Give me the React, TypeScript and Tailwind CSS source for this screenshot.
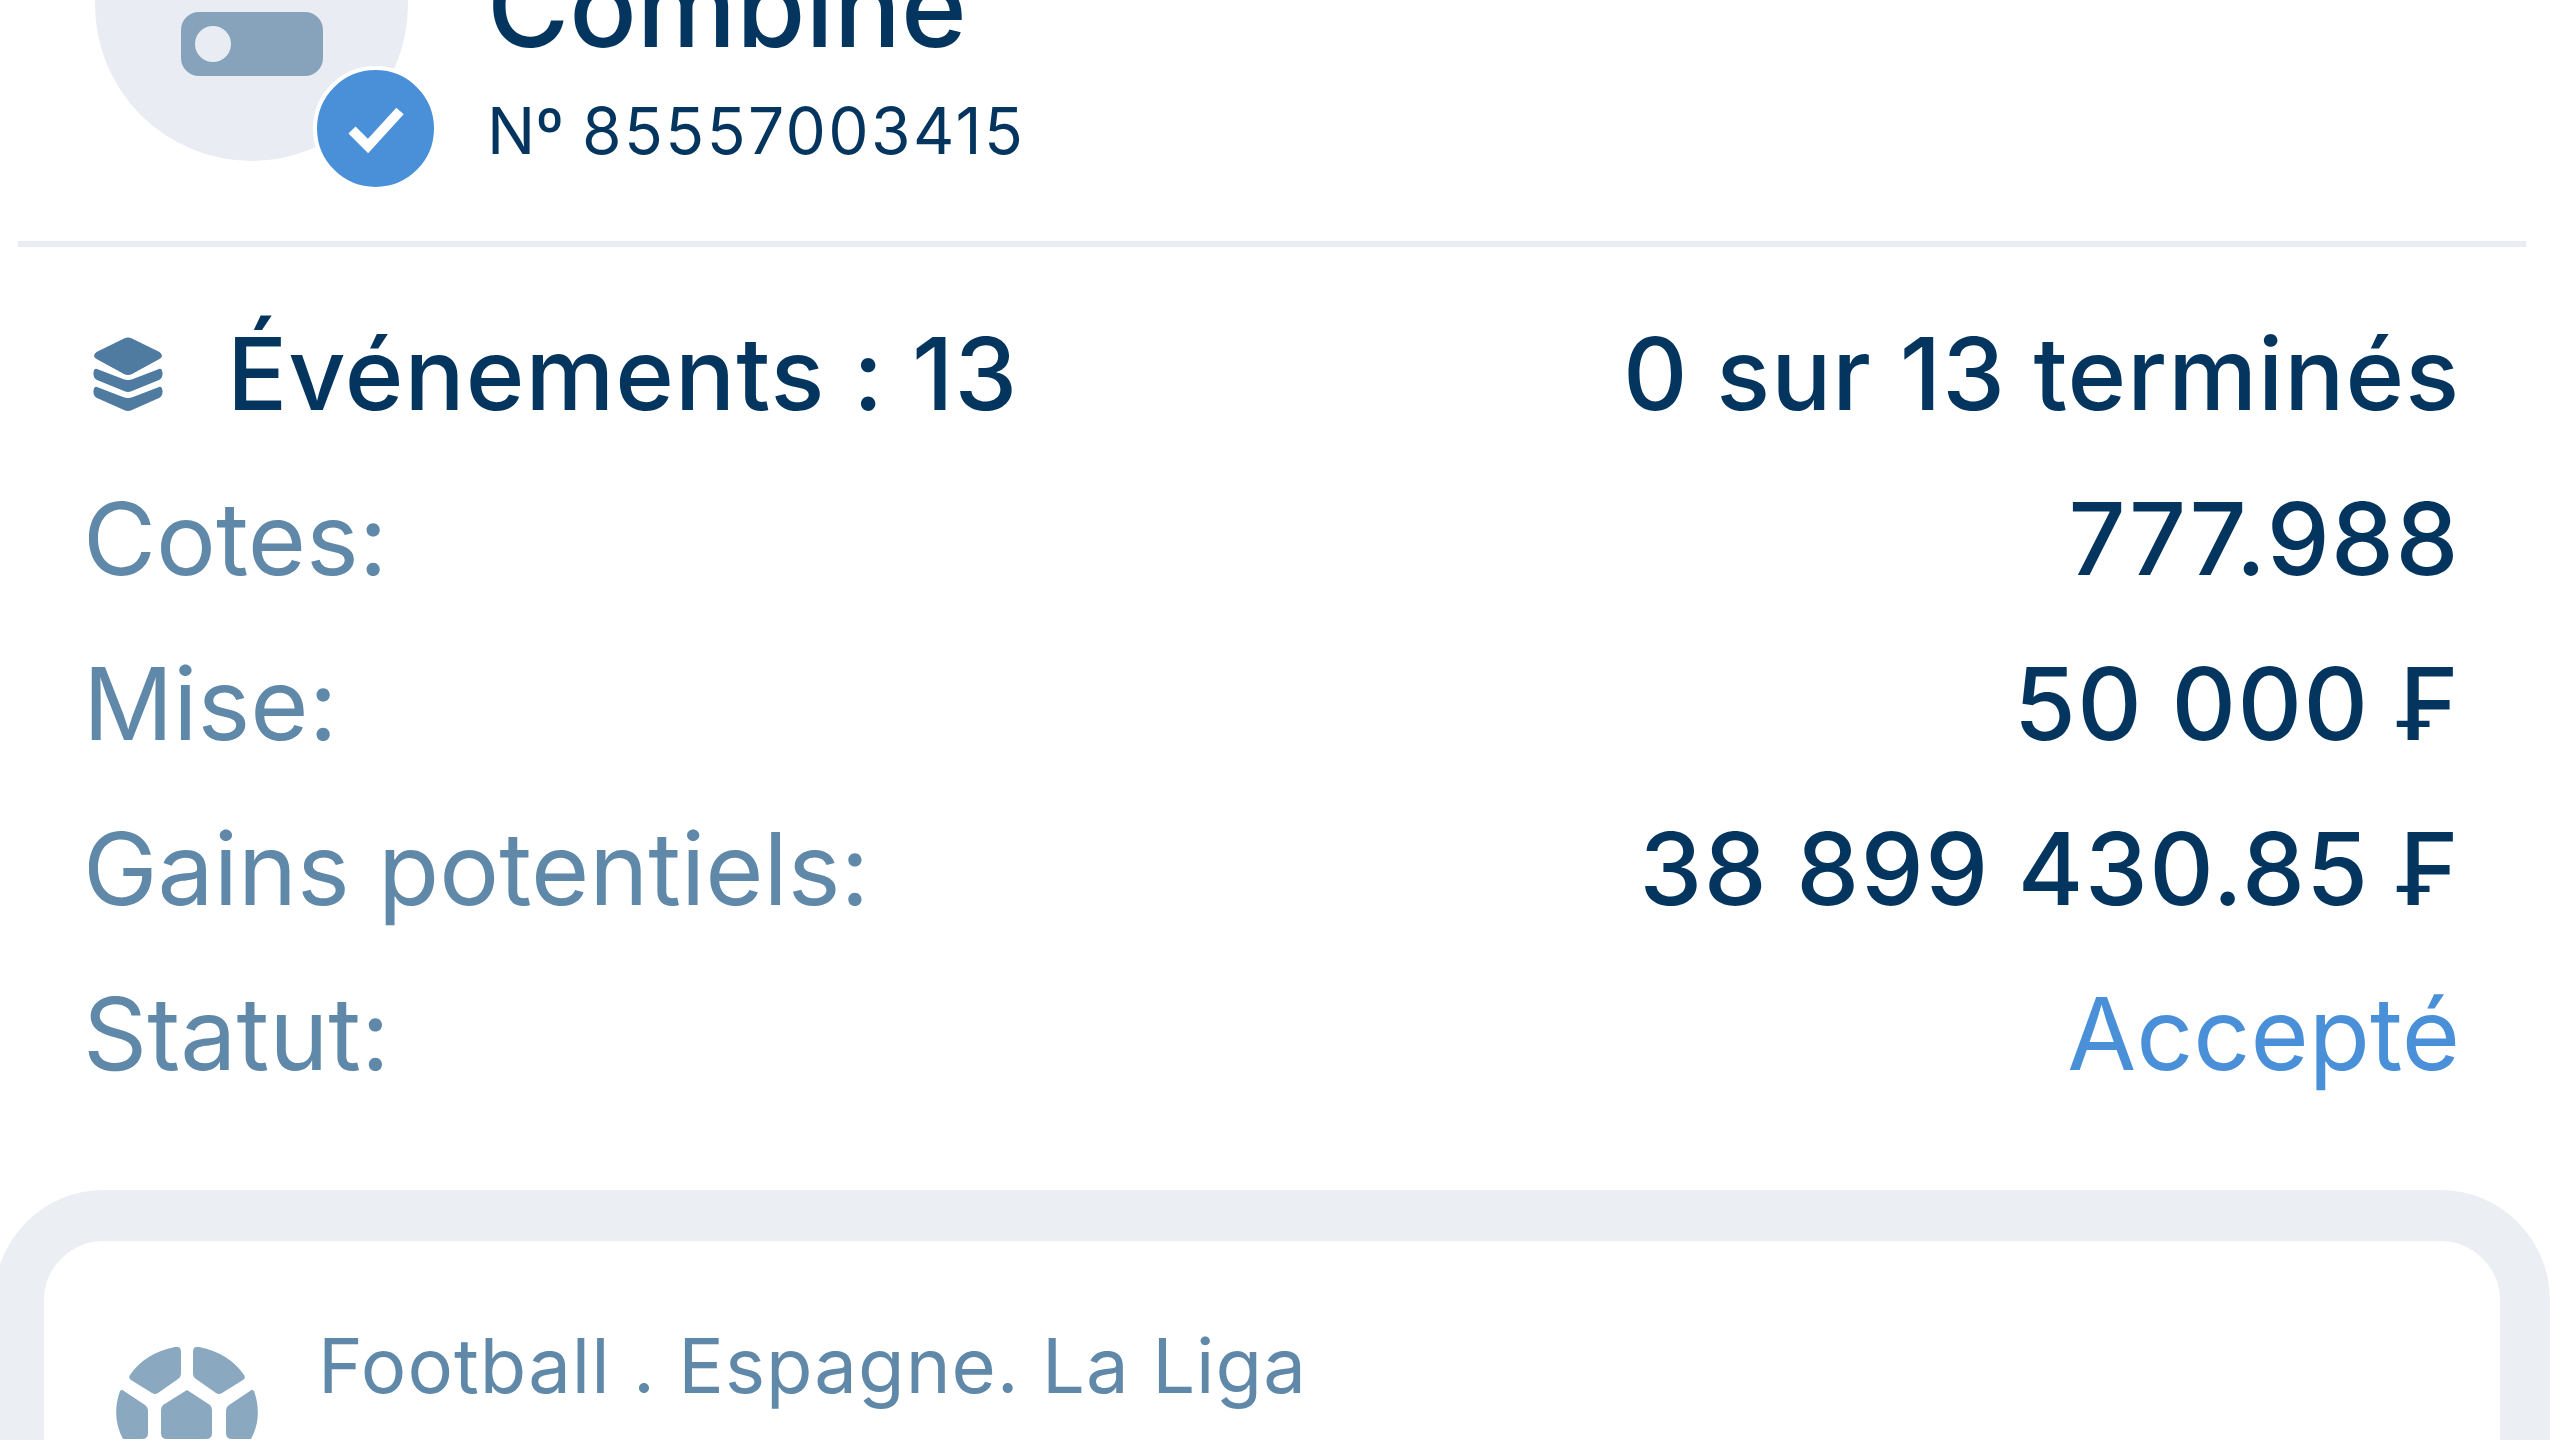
const font = { fontFamily: 'Inter, "Liberation Sans", sans-serif' };

function Layers() {
  return (
    <svg width="70" height="74" viewBox="0 0 70 74" className="shrink-0">
      <path d="M31 1.5 Q35 -0.5 39 1.5 L66.5 15 Q71.5 19 66.5 22 L39 37 Q35 39 31 37 L3.5 22 Q-1.5 19 3.5 15 Z" fill="#4f7ba1" />
      <path d="M4 32 Q1 31 0.5 36 Q0 41 4 43 L31 54 Q35 56 39 54 L66 43 Q70 41 69.5 36 Q69 31 66 32 L40 42 Q35 44 30 42 Z" fill="#4f7ba1" />
      <path d="M4 50 Q1 49 0.5 54 Q0 59 4 61 L31 73 Q35 75 39 73 L66 61 Q70 59 69.5 54 Q69 49 66 50 L40 60 Q35 62 30 60 Z" fill="#4f7ba1" />
    </svg>
  );
}

function Ball() {
  return (
    <svg width="144" height="144" viewBox="0 0 144 144" className="absolute left-[71px] top-[107px]">
      <g fill="#8aa8bf">
        <path d="M60 0 Q66 -1 66 5 L66 26 Q66 30 63 32 L43 46 Q40 48 37 46 L16 33 Q13 31 15 28 Q30 6 60 0 Z" />
        <path d="M84 0 Q78 -1 78 5 L78 26 Q78 30 81 32 L101 46 Q104 48 107 46 L128 33 Q131 31 129 28 Q114 6 84 0 Z" />
        <path d="M5 44 Q7 42 9 44 L30 58 Q33 60 33 63 L33 86 Q33 92 27 92 L8 92 Q-4 70 5 44 Z" />
        <path d="M72 43 L95 58 Q97 60 97 63 L97 86 Q97 92 91 92 L52 92 Q46 92 46 86 L46 63 Q46 60 48 58 Z" />
        <path d="M139 44 Q137 42 135 44 L114 58 Q111 60 111 63 L111 86 Q111 92 117 92 L136 92 Q148 70 139 44 Z" />
      </g>
    </svg>
  );
}

function Row({ label, value, accent }: { label: string; value: string; accent?: boolean }) {
  return (
    <div className="flex h-[165px] items-center justify-between text-[100px]">
      <span className="text-[#5f88a9]">{label}</span>
      <span className={accent ? 'text-[#4a90d9]' : 'font-medium tracking-[1.5px] text-[#04355f]'}>{value}</span>
    </div>
  );
}

export default function App() {
  return (
    <div className="relative h-[1440px] w-[2560px] overflow-hidden bg-white [font-feature-settings:'calt'_0]" style={font}>
      <header className="-mt-[152px] flex pl-[95px]">
        <div className="relative h-[313px] w-[313px] shrink-0 rounded-full bg-[#e9edf3]">
          <div className="absolute left-[86px] top-[164px] flex h-[64px] w-[142px] items-center rounded-[18px] bg-[#87a3bb] pl-[14px]">
            <div className="h-[36px] w-[36px] rounded-full bg-[#e9edf3]" />
          </div>
          <div className="absolute left-[218px] top-[218px] flex h-[125px] w-[125px] items-center justify-center rounded-full border-[4px] border-white bg-[#4a90d9]">
            <svg width="58" height="48" viewBox="0 0 58 48">
              <path d="M5 25 L21 41 L53 6" fill="none" stroke="white" strokeWidth="10" />
            </svg>
          </div>
        </div>
        <div className="ml-[79px] pt-[102px] text-[#04355f]">
          <div className="text-[112px] font-medium leading-[112px]">Combine</div>
          <div className="mt-[34px] text-[64px] leading-[70px]">
            Nº <span className="tracking-[2.4px]">85557003415</span>
          </div>
        </div>
      </header>
      <div className="ml-[18px] mt-[75px] h-[6px] w-[2508px] bg-[#e9ecf3]" />
      <section className="ml-[83px] mt-[44px] w-[2377px]">
        <div className="flex h-[165px] items-center justify-between text-[100px] font-medium tracking-[1px] text-[#04355f]">
          <div className="flex items-center">
            <div className="ml-[10px]"><Layers /></div>
            <span className="ml-[64px]">Événements : 13</span>
          </div>
          <span>0 sur 13 terminés</span>
        </div>
        <Row label="Cotes:" value="777.988" />
        <Row label="Mise:" value="50 000 ₣" />
        <Row label="Gains potentiels:" value="38 899 430.85 ₣" />
        <Row label="Statut:" value="Accepté" accent />
      </section>
      <div className="-ml-[6px] mt-[74px] h-[400px] w-[2556px] rounded-t-[110px] border-x-[50px] border-t-[51px] border-[#ebeef3] bg-white">
      </div>
      <div className="absolute left-[318px] top-[1320px] text-[76px] leading-[90px] tracking-[1px] text-[#5f88a9]">Football . Espagne. La Liga</div>
      <div className="absolute left-[44px] top-[1240px] h-[200px] w-[300px]"><Ball /></div>
    </div>
  );
}
